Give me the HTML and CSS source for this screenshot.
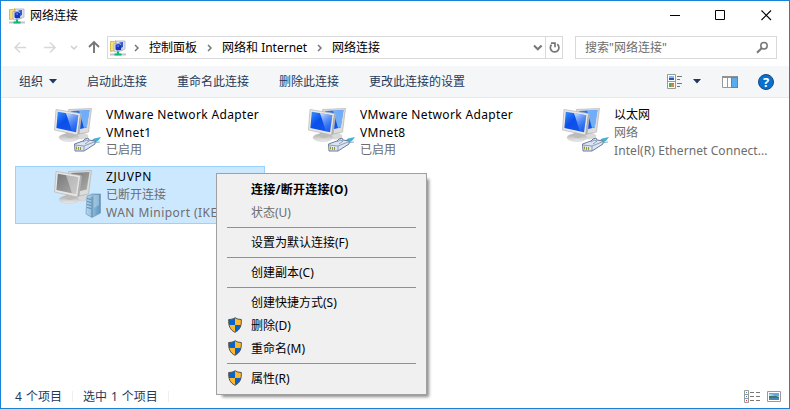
FILE: index.html
```
<!DOCTYPE html>
<html lang="zh-CN">
<head>
<meta charset="utf-8">
<title>网络连接</title>
<link rel="stylesheet" href="styles.css">
</head>
<body>
<svg class="defs" width="0" height="0" aria-hidden="true">
  <defs>
    <linearGradient id="blue" x1="0" y1="0" x2="1" y2="1"><stop offset="0" stop-color="#3d93fa"/><stop offset=".4" stop-color="#0a4fec"/><stop offset="1" stop-color="#1a57e6"/></linearGradient>
    <linearGradient id="shine" x1="0" y1="0" x2=".5" y2="1"><stop offset="0" stop-color="#fff" stop-opacity=".85"/><stop offset="1" stop-color="#3d8dff" stop-opacity=".25"/></linearGradient>
    <linearGradient id="gray" x1="0" y1="0" x2="1" y2="1"><stop offset="0" stop-color="#777"/><stop offset="1" stop-color="#aeaeae"/></linearGradient>
    <linearGradient id="base" x1="0" y1="0" x2="0" y2="1"><stop offset="0" stop-color="#aaa"/><stop offset="1" stop-color="#ececec"/></linearGradient>
    <linearGradient id="tower" x1="0" y1="0" x2="1" y2="0"><stop offset="0" stop-color="#b9d8ed"/><stop offset="1" stop-color="#5d93bd"/></linearGradient>
    <symbol id="stand" viewBox="0 0 48 48">
      <ellipse cx="27" cy="28" rx="7" ry="3" fill="#d9d9d9" stroke="#ccc" stroke-width=".5"/>
      <path d="M14.500 1.500 37.500 .5 34.500 24 20 27Z" fill="#dcdcda" stroke="#aaa" stroke-width=".6"/>
    </symbol>
    <symbol id="front" viewBox="0 0 48 48">
      <ellipse cx="15" cy="29.500" rx="10" ry="4" fill="url(#base)" stroke="#cdcdcd" stroke-width=".5"/>
      <path d="M12 23h7l1 6q-4 2-8 0Z" fill="#bbb"/>
      <path d="M2 1.500 26.500 5.500 23.500 27 .5 22Z" fill="#e7e7e5" stroke="#b5b5b3" stroke-width=".7"/>
      <path d="M26.500 5.500 23.500 27 25.500 26 28 6Z" fill="#b0b0b0"/>
    </symbol>
    <symbol id="net" viewBox="0 0 48 48">
      <use href="#stand" width="48" height="48"/>
      <path d="M17 3 35.500 2 32.700 19.500 22 22Z" fill="url(#blue)"/><path d="M25 2.500 35.500 2 33 19 30 20Z" fill="#9bd4ff" opacity=".7"/>
      <use href="#front" width="48" height="48"/>
      <path d="M3.800 3.700 24.300 7.200 22 24.200 2.400 20Z" fill="url(#blue)"/><path d="M12 5 24.300 7.200 22 24.200 18 23.400Z" fill="url(#shine)"/>
      <path d="M37 33 40 30.500 47 29 44 33 40 35Z" fill="#45b1d3"/><path d="M38 35 46 34" stroke="#8cb2c4"/>
      <path d="M20.500 36 29 33 31 31 34 30 35 32 41 33 41 36 30 43 21 43Z" fill="#dbe5f3" stroke="#6b7d9e"/>
      <path d="M21 37 30 38 40 34M30 38v5M29 34l3-2 3 1-4 3" fill="none" stroke="#7b8dab" stroke-width=".8"/>
      <path d="M22.500 38.500v3M24.500 39v3M26.500 39v3" stroke="#9a963e"/>
    </symbol>
    <symbol id="vpn" viewBox="0 0 48 48">
      <use href="#stand" width="48" height="48"/>
      <path d="M17 3 35.500 2 32.700 19.500 22 22Z" fill="url(#gray)"/>
      <use href="#front" width="48" height="48"/>
      <path d="M3.800 3.700 24.300 7.200 22 24.200 2.400 20Z" fill="url(#gray)"/><path d="M12 5 24.300 7.200 22 24.200 18 23.400Z" fill="#eee" opacity=".45"/>
      <path d="M33 26 38 24 46.500 24 46.500 43 38 47.500 32 44Z" fill="url(#tower)" stroke="#6f9abc" stroke-width=".7"/>
      <path d="M38 27v20M33 28.500l4 1M33 31.500l4 1M33 34.500l4 1M33 37.500l4 1" stroke="#44789e" stroke-width=".8"/><path d="M40 25h5v10l-5 3Z" fill="#b8d7eb" opacity=".5"/>
    </symbol>
    <symbol id="place" viewBox="0 0 16 16">
      <path d="M.5 1.500h4l1-1v10l-5 1Z" fill="#f5df78" stroke="#d8bb51"/>
      <path d="M6 1h9v8l-2 1H7Z" fill="#dfe3ea" stroke="#aab2bd" stroke-width=".8"/>
      <path d="M4 3.500h7l1 7-6 1.500-2-1Z" fill="#ebedf3" stroke="#9da7b7" stroke-width=".8"/>
      <path d="M5.500 4.500 9 4l2 1v5l-4 .5-1.500-1Z" fill="#1635c1"/><path d="M9 2.500l4-.5v5l-2 1V4Z" fill="#3357cd"/><path d="M6 6l3-1v2Z" fill="#6285f3"/>
      <path d="M0 14.500h16" stroke="#c1c5c8" stroke-width="2"/><path d="M7 11.500h2v2h2.500v2h-7v-2H7Z" fill="#0abb73"/>
    </symbol>
    <symbol id="shield" viewBox="0 0 16 16">
      <path d="M8 .7Q10.500 2.500 14.300 2.500C14.700 8.500 13 13 8 15.300 3 13 1.300 8.500 1.700 2.500 5.500 2.500 8 .7 8 .7Z" fill="#ffb72d"/>
      <path d="M8 1 Q5 2.500 1.900 2.700L2 8H8ZM8 8h6Q13 13 8 15Z" fill="#0865c8"/>
      <path d="M8 .7Q10.500 2.500 14.300 2.500C14.700 8.500 13 13 8 15.300 3 13 1.300 8.500 1.700 2.500 5.500 2.500 8 .7 8 .7Z" fill="none" stroke="#4d5155" stroke-width="1"/>
    </symbol>
  </defs>
</svg>
<div class="window">
  <header class="titlebar">
    <svg class="place"><use href="#place"/></svg><h1>网络连接</h1>
    <div class="controls">
      <svg width="46" height="29"><path d="M18 14.500h10" stroke="#000"/></svg>
      <svg width="46" height="29"><path d="M17.500 9.500h9v9h-9z" fill="none" stroke="#000"/></svg>
      <svg width="46" height="29"><path d="m17.500 9.500 9.500 9.500m0-9.500-9.500 9.500" stroke="#000" stroke-width="1.100"/></svg>
    </div>
  </header>
  <nav class="nav">
    <svg class="arrows" width="93" height="22" fill="none">
      <path d="M25 11.500H14m5-5-5 5 5 5M43 11.500h11m-5-5 5 5-5 5" stroke="#d8d8d8" stroke-width="1.500"/>
      <path d="m70 10 3 3 3-3" stroke="#cfcfcf" stroke-width="1.500"/><path d="M93 17V6m-5 5 5-5 5 5" stroke="#767676" stroke-width="1.900"/>
    </svg>
    <div class="address">
      <svg class="place"><use href="#place"/></svg>
      <svg class="chev"><path d="m1 1 3 3-3 3"/></svg><span class="crumb">控制面板</span>
      <svg class="chev"><path d="m1 1 3 3-3 3"/></svg><span class="crumb inet">网络和 Internet</span>
      <svg class="chev"><path d="m1 1 3 3-3 3"/></svg><span class="crumb">网络连接</span>
      <svg class="drop" width="17" height="21"><path d="m6 8.500 3.800 3.800 3.800-3.800" fill="none" stroke="#777" stroke-width="2"/></svg>
      <svg class="refresh" width="17" height="21" fill="none" stroke="#777"><path d="M11.200 7.200a4.300 4.300 0 1 1-5.700.5" stroke-width="1.700"/><path d="M5 6.200h4v4" stroke-width="1.700"/></svg>
    </div>
    <div class="search"><span>搜索"网络连接"</span><svg width="13" height="13" fill="none" stroke="#777"><circle cx="8" cy="4.800" r="3.200" stroke-width="1.500"/><path d="M5.600 7.200 1 11.800" stroke-width="2"/></svg></div>
  </nav>
  <div class="toolbar">
    <span class="organize">组织</span><svg class="tri" width="8" height="5"><path d="M0 0h8L4 4.500Z"/></svg>
    <span class="cmd">启动此连接</span><span class="cmd">重命名此连接</span><span class="cmd">删除此连接</span><span class="cmd">更改此连接的设置</span>
    <svg class="views" width="15" height="15"><path d="M.5.500h8v14h-8zM.5 7.500h8" fill="#fff" stroke="#999"/><path d="M2 2h5v2H2z" fill="#80bcf3"/><path d="M2 4h5v2H2z" fill="#334fb0"/><path d="M2 9h5v4H2z" fill="#64a553"/><path d="M4 10h3v3H4z" fill="#d28943"/><path d="M10 2.500h5M10 5.500h3M10 9.500h5M10 12.500h3" stroke="#777"/></svg>
    <svg class="tri viewtri" width="8" height="5"><path d="M0 0h8L4 4.500Z"/></svg>
    <svg class="pane" width="16" height="12"><path d="M.5.500h15v11H.5zM5.500 1v11" fill="#fff" stroke="#999"/><path d="M0 0h16v2H0z" fill="#929292"/><path d="M9 1h7v11H9z" fill="#3191e5"/><path d="M10 2h5v9h-5z" fill="#58acee"/></svg>
    <div class="help">?</div>
  </div>
  <main class="content">
    <article class="tile"><svg class="device"><use href="#net"/></svg><div class="info"><b>VMware Network Adapter<br>VMnet1</b><span>已启用</span></div></article>
    <article class="tile"><svg class="device"><use href="#net"/></svg><div class="info"><b>VMware Network Adapter<br>VMnet8</b><span>已启用</span></div></article>
    <article class="tile"><svg class="device"><use href="#net"/></svg><div class="info"><b class="cjk">以太网</b><span>网络</span><span class="intel">Intel(R) Ethernet Connect...</span></div></article>
    <article class="tile selected"><svg class="device"><use href="#vpn"/></svg><div class="info"><b class="vpn-name">ZJUVPN</b><span>已断开连接</span><span class="wan">WAN Miniport (IKEv2)</span></div></article>
  </main>
  <footer class="status">
    <span>4 个项目</span><i></i><span>选中 1 个项目</span><i></i>
    <svg class="modes" width="38" height="14"><path d="M.5.500h4v12h-4zM.5 4.500h4M.5 8.500h4" fill="#fff" stroke="#999"/><path d="M2 2h1v1H2z" fill="#4b9ac0"/><path d="M2 6h1v1H2z" fill="#3070dc"/><path d="M2 10h1v1H2z" fill="#d33"/><path d="M6 2.500h4m2 0h4M6 6.500h4m2 0h4M6 10.500h4m2 0h4" stroke="#777"/><path d="M23.500 1.500h13v10h-13z" fill="#fff" stroke="#999"/><path d="M25 3h10v7H25z" fill="#67a5ed"/><path d="M25 4q4 0 6 2h4v1H25Z" fill="#b5d8f8"/><path d="M25 6q6-1 10 1v1H25Z" fill="#3a7765"/><path d="M25 8h10v2H25z" fill="#4a86b4"/></svg>
  </footer>
</div>
<div class="menu">
  <div class="item default"><span>连接/断开连接(O)</span></div>
  <div class="item disabled"><span>状态(U)</span></div><hr>
  <div class="item"><span>设置为默认连接(F)</span></div><hr>
  <div class="item"><span>创建副本(C)</span></div><hr>
  <div class="item"><span>创建快捷方式(S)</span></div>
  <div class="item"><svg><use href="#shield"/></svg><span>删除(D)</span></div>
  <div class="item"><svg><use href="#shield"/></svg><span>重命名(M)</span></div><hr>
  <div class="item"><svg><use href="#shield"/></svg><span>属性(R)</span></div>
</div>
</body>
</html>
```
FILE: styles.css
```
* { box-sizing: border-box; }
body { margin: 0; overflow: hidden; font: 12px/18px "Noto Sans", "Noto Sans CJK SC", sans-serif; color: #000; }
svg { display: block; flex: none; }
.defs { position: absolute; }
.window { width: 790px; height: 409px; border: 1px solid #1883d7; background: #fff; display: flex; flex-direction: column; }
.titlebar { height: 29px; flex: none; display: flex; align-items: center; padding-left: 8px; }
h1 { margin: 0 0 0 5px; font-size: 12px; font-weight: 400; line-height: 18px; }
.place { width: 16px; height: 16px; }
.controls { margin-left: auto; display: flex; margin-right: -1px; }
.nav { height: 36px; flex: none; padding-top: 6px; display: flex; }
.arrows { overflow: visible; }
.address { margin-left: 13px; width: 456px; height: 23px; border: 1px solid #d9d9d9; display: flex; align-items: center; padding-left: 2px; }
.chev { width: 6px; height: 8px; margin-left: 8px; fill: none; stroke: #777; stroke-width: 1.5; }
.crumb { margin-left: 9px; white-space: nowrap; }
.inet { width: 85px; }
.crumb + .chev { margin-left: 10px; }
.place + .chev { margin-left: 8px; }
.drop { margin-left: auto; }
.refresh { border-left: 1px solid #d9d9d9; }
.search { margin-left: 12px; width: 202px; height: 23px; border: 1px solid #d9d9d9; display: flex; align-items: center; justify-content: space-between; padding: 0 7px 0 9px; color: #6d6d6d; }
.toolbar { height: 32px; flex: none; background: #f5f6f7; border-bottom: 1px solid #e6e9ed; display: flex; align-items: center; padding-left: 18px; color: #1e395b; }
.tri { fill: #1e395b; margin-left: 6px; }
.cmd { margin-left: 30px; }
.views { margin-left: auto; }
.viewtri { margin-left: 11px; }
.pane { margin-left: 21px; }
.help { width: 16px; height: 16px; border-radius: 50%; border: 1px solid #17477f; background: #0871cf; color: #fff; font: bold 13px/14px "Noto Sans", sans-serif; text-align: center; margin: 0 15px 0 20px; }
.content { flex: 1; padding: 6px 0 0 14px; display: grid; grid-template-columns: repeat(3, 250px); grid-auto-rows: 58px; column-gap: 4px; row-gap: 4px; }
.tile { display: flex; border: 1px solid transparent; padding-left: 38px; }
.device { width: 48px; height: 48px; margin-top: 3px; }
.info { margin: 1px 0 0 4px; line-height: 18px; white-space: nowrap; }
.info b, .info span { display: block; font-weight: 400; }
.info b { line-height: 17.5px; letter-spacing: .35px; }
.info .cjk { letter-spacing: 0; }
.info .vpn-name { letter-spacing: .6px; }
.info span { color: #6d6d6d; }
.intel { letter-spacing: .08px; }
.wan { letter-spacing: .45px; }
.selected { background: #cce8ff; border-color: #99d1ff; }
.status { height: 24px; flex: none; display: flex; align-items: center; padding: 1px 7px 0 14px; color: #1e395b; word-spacing: .9px; }
.status i { width: 1px; height: 11px; background: #eee; margin: 0 10px; }
.modes { margin-left: auto; }
.menu { position: absolute; left: 216px; top: 173px; width: 211px; height: 222px; background: #f0f0f0; border: 1px solid #a0a0a0; padding-top: 4px; box-shadow: 4px 4px 3px -2px rgba(0,0,0,.45); }
.item { height: 23px; display: flex; align-items: center; padding-left: 34px; }
.item svg { width: 16px; height: 16px; margin: -2px 8px 0 -24px; }
.default { font-weight: 700; letter-spacing: .25px; }
.disabled { color: #6d6d6d; }
.menu hr { height: 1px; border: 0; background: #919191; margin: 3px 10px; }
```
